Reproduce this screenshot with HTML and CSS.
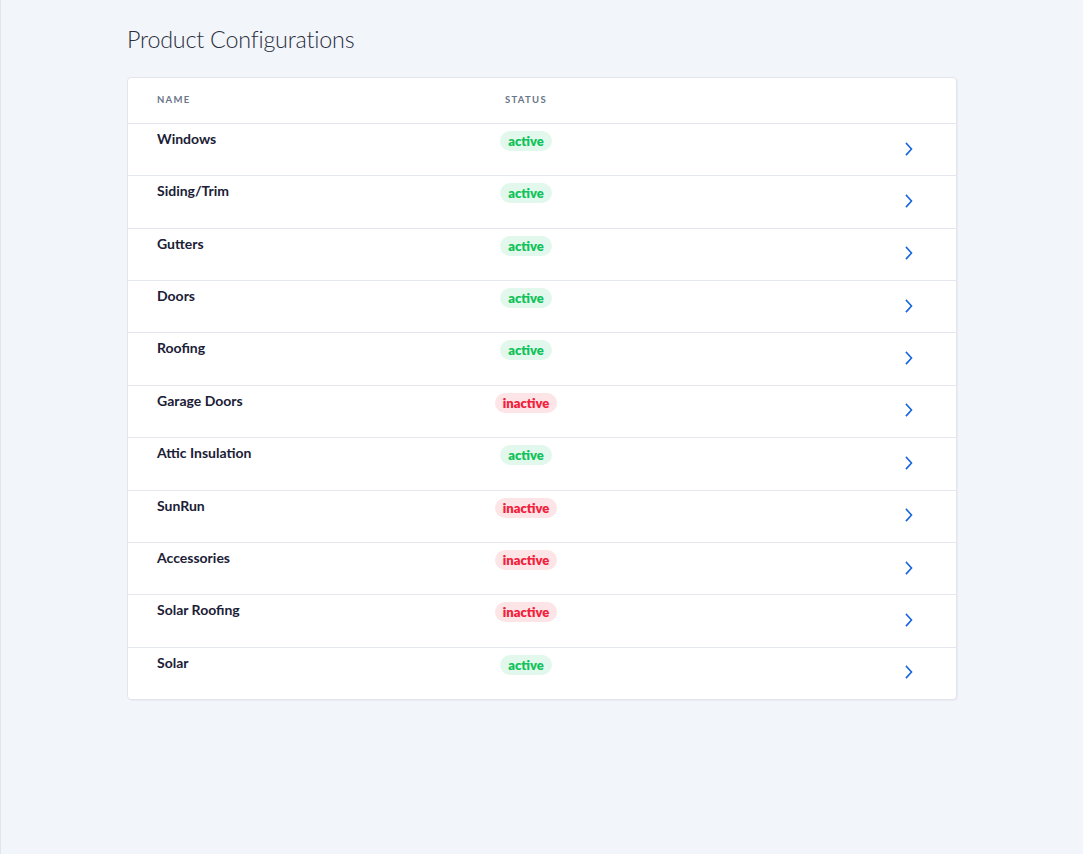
FILE: index.html
```html
<!DOCTYPE html>
<html lang="en">
<head>
<meta charset="utf-8">
<title>Product Configurations</title>
<link rel="stylesheet" href="styles.css">
</head>
<body>
<main class="page">
  <h1 class="title">Product Configurations</h1>
  <section class="card">
    <div class="row head">
      <div class="col-name">Name</div>
      <div class="col-status">Status</div>
      <div class="col-action"></div>
    </div>
    <div class="row"><div class="col-name name">Windows</div><div class="col-status"><span class="badge on">active</span></div><div class="col-action"><svg class="chev" viewBox="0 0 8 14"><path d="M1.5 1.5 L6.5 7 L1.5 12.5"/></svg></div></div>
    <div class="row"><div class="col-name name">Siding/Trim</div><div class="col-status"><span class="badge on">active</span></div><div class="col-action"><svg class="chev" viewBox="0 0 8 14"><path d="M1.5 1.5 L6.5 7 L1.5 12.5"/></svg></div></div>
    <div class="row"><div class="col-name name">Gutters</div><div class="col-status"><span class="badge on">active</span></div><div class="col-action"><svg class="chev" viewBox="0 0 8 14"><path d="M1.5 1.5 L6.5 7 L1.5 12.5"/></svg></div></div>
    <div class="row"><div class="col-name name">Doors</div><div class="col-status"><span class="badge on">active</span></div><div class="col-action"><svg class="chev" viewBox="0 0 8 14"><path d="M1.5 1.5 L6.5 7 L1.5 12.5"/></svg></div></div>
    <div class="row"><div class="col-name name">Roofing</div><div class="col-status"><span class="badge on">active</span></div><div class="col-action"><svg class="chev" viewBox="0 0 8 14"><path d="M1.5 1.5 L6.5 7 L1.5 12.5"/></svg></div></div>
    <div class="row"><div class="col-name name">Garage Doors</div><div class="col-status"><span class="badge off">inactive</span></div><div class="col-action"><svg class="chev" viewBox="0 0 8 14"><path d="M1.5 1.5 L6.5 7 L1.5 12.5"/></svg></div></div>
    <div class="row"><div class="col-name name">Attic Insulation</div><div class="col-status"><span class="badge on">active</span></div><div class="col-action"><svg class="chev" viewBox="0 0 8 14"><path d="M1.5 1.5 L6.5 7 L1.5 12.5"/></svg></div></div>
    <div class="row"><div class="col-name name">SunRun</div><div class="col-status"><span class="badge off">inactive</span></div><div class="col-action"><svg class="chev" viewBox="0 0 8 14"><path d="M1.5 1.5 L6.5 7 L1.5 12.5"/></svg></div></div>
    <div class="row"><div class="col-name name">Accessories</div><div class="col-status"><span class="badge off">inactive</span></div><div class="col-action"><svg class="chev" viewBox="0 0 8 14"><path d="M1.5 1.5 L6.5 7 L1.5 12.5"/></svg></div></div>
    <div class="row"><div class="col-name name">Solar Roofing</div><div class="col-status"><span class="badge off">inactive</span></div><div class="col-action"><svg class="chev" viewBox="0 0 8 14"><path d="M1.5 1.5 L6.5 7 L1.5 12.5"/></svg></div></div>
    <div class="row"><div class="col-name name">Solar</div><div class="col-status"><span class="badge on">active</span></div><div class="col-action"><svg class="chev" viewBox="0 0 8 14"><path d="M1.5 1.5 L6.5 7 L1.5 12.5"/></svg></div></div>
  </section>
</main>
</body>
</html>
```
FILE: styles.css
```css
html, body {
  margin: 0;
  padding: 0;
}
body {
  background: #f2f5fa;
  border-left: 1px solid #e1e5ee;
  min-height: 854px;
  box-sizing: border-box;
  font-family: Lato, "Open Sans", Arial, sans-serif;
  color: #1f2438;
}
.page {
  width: 830px;
  margin: 0 auto;
  padding-top: 24px;
}
.title {
  margin: 0 0 23px 0;
  font-size: 23.3px;
  line-height: 30px;
  font-weight: 300;
  color: #2a2f40;
  letter-spacing: -0.2px;
}
.card {
  background: #fff;
  border: 1px solid #e2e5ee;
  border-radius: 4px;
  box-shadow: 1px 1px 1px rgba(30, 40, 80, 0.04);
}
.row {
  display: grid;
  grid-template-columns: 310px 118px 1fr;
  padding: 0 0 0 29px;
  height: 51.36px;
  border-top: 1px solid #e4e7ef;
  align-items: start;
}
.row.head {
  border-top: none;
  height: 45px;
  align-items: center;
}
.head .col-name, .head .col-status {
  font-size: 9.5px;
  font-weight: 700;
  letter-spacing: 1.3px;
  text-transform: uppercase;
  color: #6a7587;
  margin-top: -2px;
}
.col-status {
  text-align: center;
}
.name {
  font-size: 14px;
  font-weight: 700;
  color: #1b2036;
  padding-top: 6px;
  line-height: 18px;
}
.row:not(.head) .col-status {
  padding-top: 6px;
}
.badge {
  display: inline-block;
  height: 20px;
  line-height: 20px;
  padding: 0 8px;
  border-radius: 10px;
  font-size: 13px;
  font-weight: 800;
}
.badge.on {
  background: #e3f8ec;
  color: #0fc25a;
}
.badge.off {
  background: #fde4e6;
  color: #f2203a;
}
.col-action {
  display: flex;
  justify-content: flex-end;
  align-self: center;
  padding-right: 43px;
  margin-top: -2px;
}
.chev {
  width: 8px;
  height: 14px;
  fill: none;
  stroke: #1565e0;
  stroke-width: 1.6;
  stroke-linecap: square;
}
```
